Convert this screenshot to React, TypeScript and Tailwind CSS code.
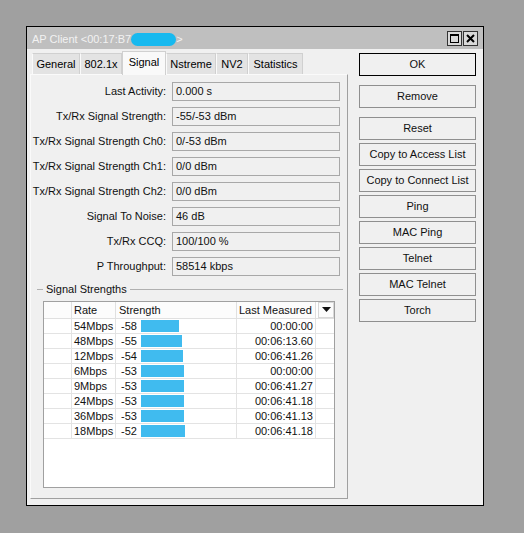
import React from "react";

const rows = [
  { label: "Last Activity:", value: "0.000 s" },
  { label: "Tx/Rx Signal Strength:", value: "-55/-53 dBm" },
  { label: "Tx/Rx Signal Strength Ch0:", value: "0/-53 dBm" },
  { label: "Tx/Rx Signal Strength Ch1:", value: "0/0 dBm" },
  { label: "Tx/Rx Signal Strength Ch2:", value: "0/0 dBm" },
  { label: "Signal To Noise:", value: "46 dB" },
  { label: "Tx/Rx CCQ:", value: "100/100 %" },
  { label: "P Throughput:", value: "58514 kbps" },
];

const table = [
  { rate: "54Mbps", s: "-58", w: 38, t: "00:00:00" },
  { rate: "48Mbps", s: "-55", w: 41, t: "00:06:13.60" },
  { rate: "12Mbps", s: "-54", w: 42, t: "00:06:41.26" },
  { rate: "6Mbps", s: "-53", w: 43, t: "00:00:00" },
  { rate: "9Mbps", s: "-53", w: 43, t: "00:06:41.27" },
  { rate: "24Mbps", s: "-53", w: 43, t: "00:06:41.18" },
  { rate: "36Mbps", s: "-53", w: 43, t: "00:06:41.13" },
  { rate: "18Mbps", s: "-52", w: 44, t: "00:06:41.18" },
];

const tabs = ["General", "802.1x", "Signal", "Nstreme", "NV2", "Statistics"];
const tabW = [48, 42, 44, 50, 32, 55];

const buttons = [
  "Copy to Access List",
  "Copy to Connect List",
  "Ping",
  "MAC Ping",
  "Telnet",
  "MAC Telnet",
  "Torch",
];

function Btn({ children, primary }: { children: React.ReactNode; primary?: boolean }) {
  return (
    <div
      className={
        "h-[23px] w-[117px] flex items-center justify-center bg-[#f0f0f0] text-[11px] whitespace-nowrap text-[#111] border " +
        (primary ? "border-black" : "border-[#8f8f8f]")
      }
    >
      {children}
    </div>
  );
}

export default function App() {
  return (
    <div
      className="w-[524px] h-[533px] bg-[#a0a0a0] pt-[26px] pl-[26px]"
      style={{ fontFamily: '"Liberation Sans", Arial, sans-serif' }}
    >
      <div className="w-[458px] h-[480px] border border-black bg-[#f0f0f0] flex flex-col">
        {/* title bar */}
        <div className="h-[22px] bg-[#bfbfbf] flex items-center pl-[5px] pr-[5px]">
          <div className="text-[11px] text-[#f2f2f2] flex items-center whitespace-nowrap pt-[2px]">
            <span>AP Client &lt;00:17:B7</span>
            <span className="inline-block w-[45px] h-[13px] rounded-full bg-[#17b9ef]" />
            <span>&gt;</span>
          </div>
          <div className="ml-auto flex gap-[1px]">
            <div className="w-[15px] h-[15px] border border-[#333] bg-[#d9d9d9] flex items-center justify-center">
              <div className="w-[9px] h-[9px] border border-black border-t-2" />
            </div>
            <div className="w-[15px] h-[15px] border border-[#333] bg-[#d9d9d9] flex items-center justify-center">
              <svg width="9" height="9" viewBox="0 0 9 9">
                <path d="M1 1L8 8M8 1L1 8" stroke="black" strokeWidth="2" />
              </svg>
            </div>
          </div>
        </div>

        <div className="flex flex-1">
          {/* left */}
          <div className="pl-[3px] pt-[1px] flex flex-col">
            <div className="flex items-end h-[24px] pl-[2px]">
              {tabs.map((t, i) =>
                t === "Signal" ? (
                  <div
                    key={t}
                    style={{ width: tabW[i] }}
                    className="h-[24px] bg-[#f9f9f9] border border-[#d0d0d0] border-b-0 text-[11px] whitespace-nowrap flex items-center justify-center pb-[2px] relative z-10 -mb-[1px]"
                  >
                    {t}
                  </div>
                ) : (
                  <div
                    key={t}
                    style={{ width: tabW[i] }}
                    className="h-[21px] bg-[#e3e3e3] border border-[#d0d0d0] border-b-0 border-l-[#fafafa] text-[11px] whitespace-nowrap flex items-center justify-center"
                  >
                    {t}
                  </div>
                )
              )}
            </div>
            <div className="w-[318px] h-[425px] border border-[#fafafa] border-r-[#a0a0a0] border-b-[#a0a0a0] bg-[#f0f0f0] flex flex-col pt-[7px]">
              <div className="flex flex-col gap-[6px]">
                {rows.map((r) => (
                  <div key={r.label} className="flex items-center h-[19px]">
                    <div className="w-[136px] shrink-0 text-right text-[11px] whitespace-nowrap text-[#111] pr-[1px]">{r.label}</div>
                    <div className="ml-[5px] w-[168px] h-[19px] border border-[#a8a8a8] bg-[#f0f0f0] text-[11px] whitespace-nowrap pl-[3px] flex items-center text-[#111]">
                      {r.value}
                    </div>
                  </div>
                ))}
              </div>
              {/* group */}
              <div className="flex items-center mt-[7px] h-[12px] pl-[6px] pr-[4px]">
                <div className="w-[6px] h-px bg-[#b0b0b0]" />
                <div className="text-[11px] px-[3px] text-[#111] whitespace-nowrap">Signal Strengths</div>
                <div className="flex-1 h-px bg-[#b0b0b0]" />
              </div>
              <div className="ml-[12px] mt-[6px] w-[292px] h-[187px] border border-[#a0a0a0] bg-white text-[11px] leading-[14px] whitespace-nowrap text-[#111]">
                <div className="grid grid-cols-[28px_44px_121px_79px_1fr] h-[17px] border-b border-[#e0e0e0]">
                  <div className="border-r border-[#e0e0e0] bg-[#fcfcfc]" />
                  <div className="border-r border-[#e0e0e0] pl-[2px] flex items-center bg-[#fcfcfc]">Rate</div>
                  <div className="border-r border-[#e0e0e0] pl-[3px] flex items-center bg-[#fcfcfc]">Strength</div>
                  <div className="border-r border-[#e0e0e0] pl-[2px] flex items-center bg-[#fcfcfc] overflow-hidden">Last Measured</div>
                  <div className="flex items-center justify-center bg-[#fcfcfc] border border-[#d8d8d8] ml-[2px]">
                    <svg width="9" height="6" viewBox="0 0 9 6">
                      <path d="M0 0H9L4.5 5Z" fill="#111" />
                    </svg>
                  </div>
                </div>
                {table.map((r, i) => (
                  <div key={i} className="grid grid-cols-[28px_44px_121px_79px_1fr] h-[15px] border-b border-[#e3e3e3]">
                    <div className="border-r border-[#e3e3e3]" />
                    <div className="border-r border-[#e3e3e3] pl-[2px] flex items-center">{r.rate}</div>
                    <div className="border-r border-[#e3e3e3] pl-[5px] flex items-center">
                      <span className="w-[20px] shrink-0">{r.s}</span>
                      <span className="h-[12px] bg-[#40bbef]" style={{ width: r.w }} />
                    </div>
                    <div className="border-r border-[#e3e3e3] pr-[2px] flex items-center justify-end">{r.t}</div>
                    <div />
                  </div>
                ))}
              </div>
            </div>
          </div>

          {/* right buttons */}
          <div className="ml-[11px] pt-[4px] flex flex-col">
            <Btn primary>OK</Btn>
            <div className="mt-[9px]">
              <Btn>Remove</Btn>
            </div>
            <div className="mt-[9px] flex flex-col gap-[3px]">
              <Btn>Reset</Btn>
              {buttons.map((b) => (
                <Btn key={b}>{b}</Btn>
              ))}
            </div>
          </div>
        </div>
      </div>
    </div>
  );
}
